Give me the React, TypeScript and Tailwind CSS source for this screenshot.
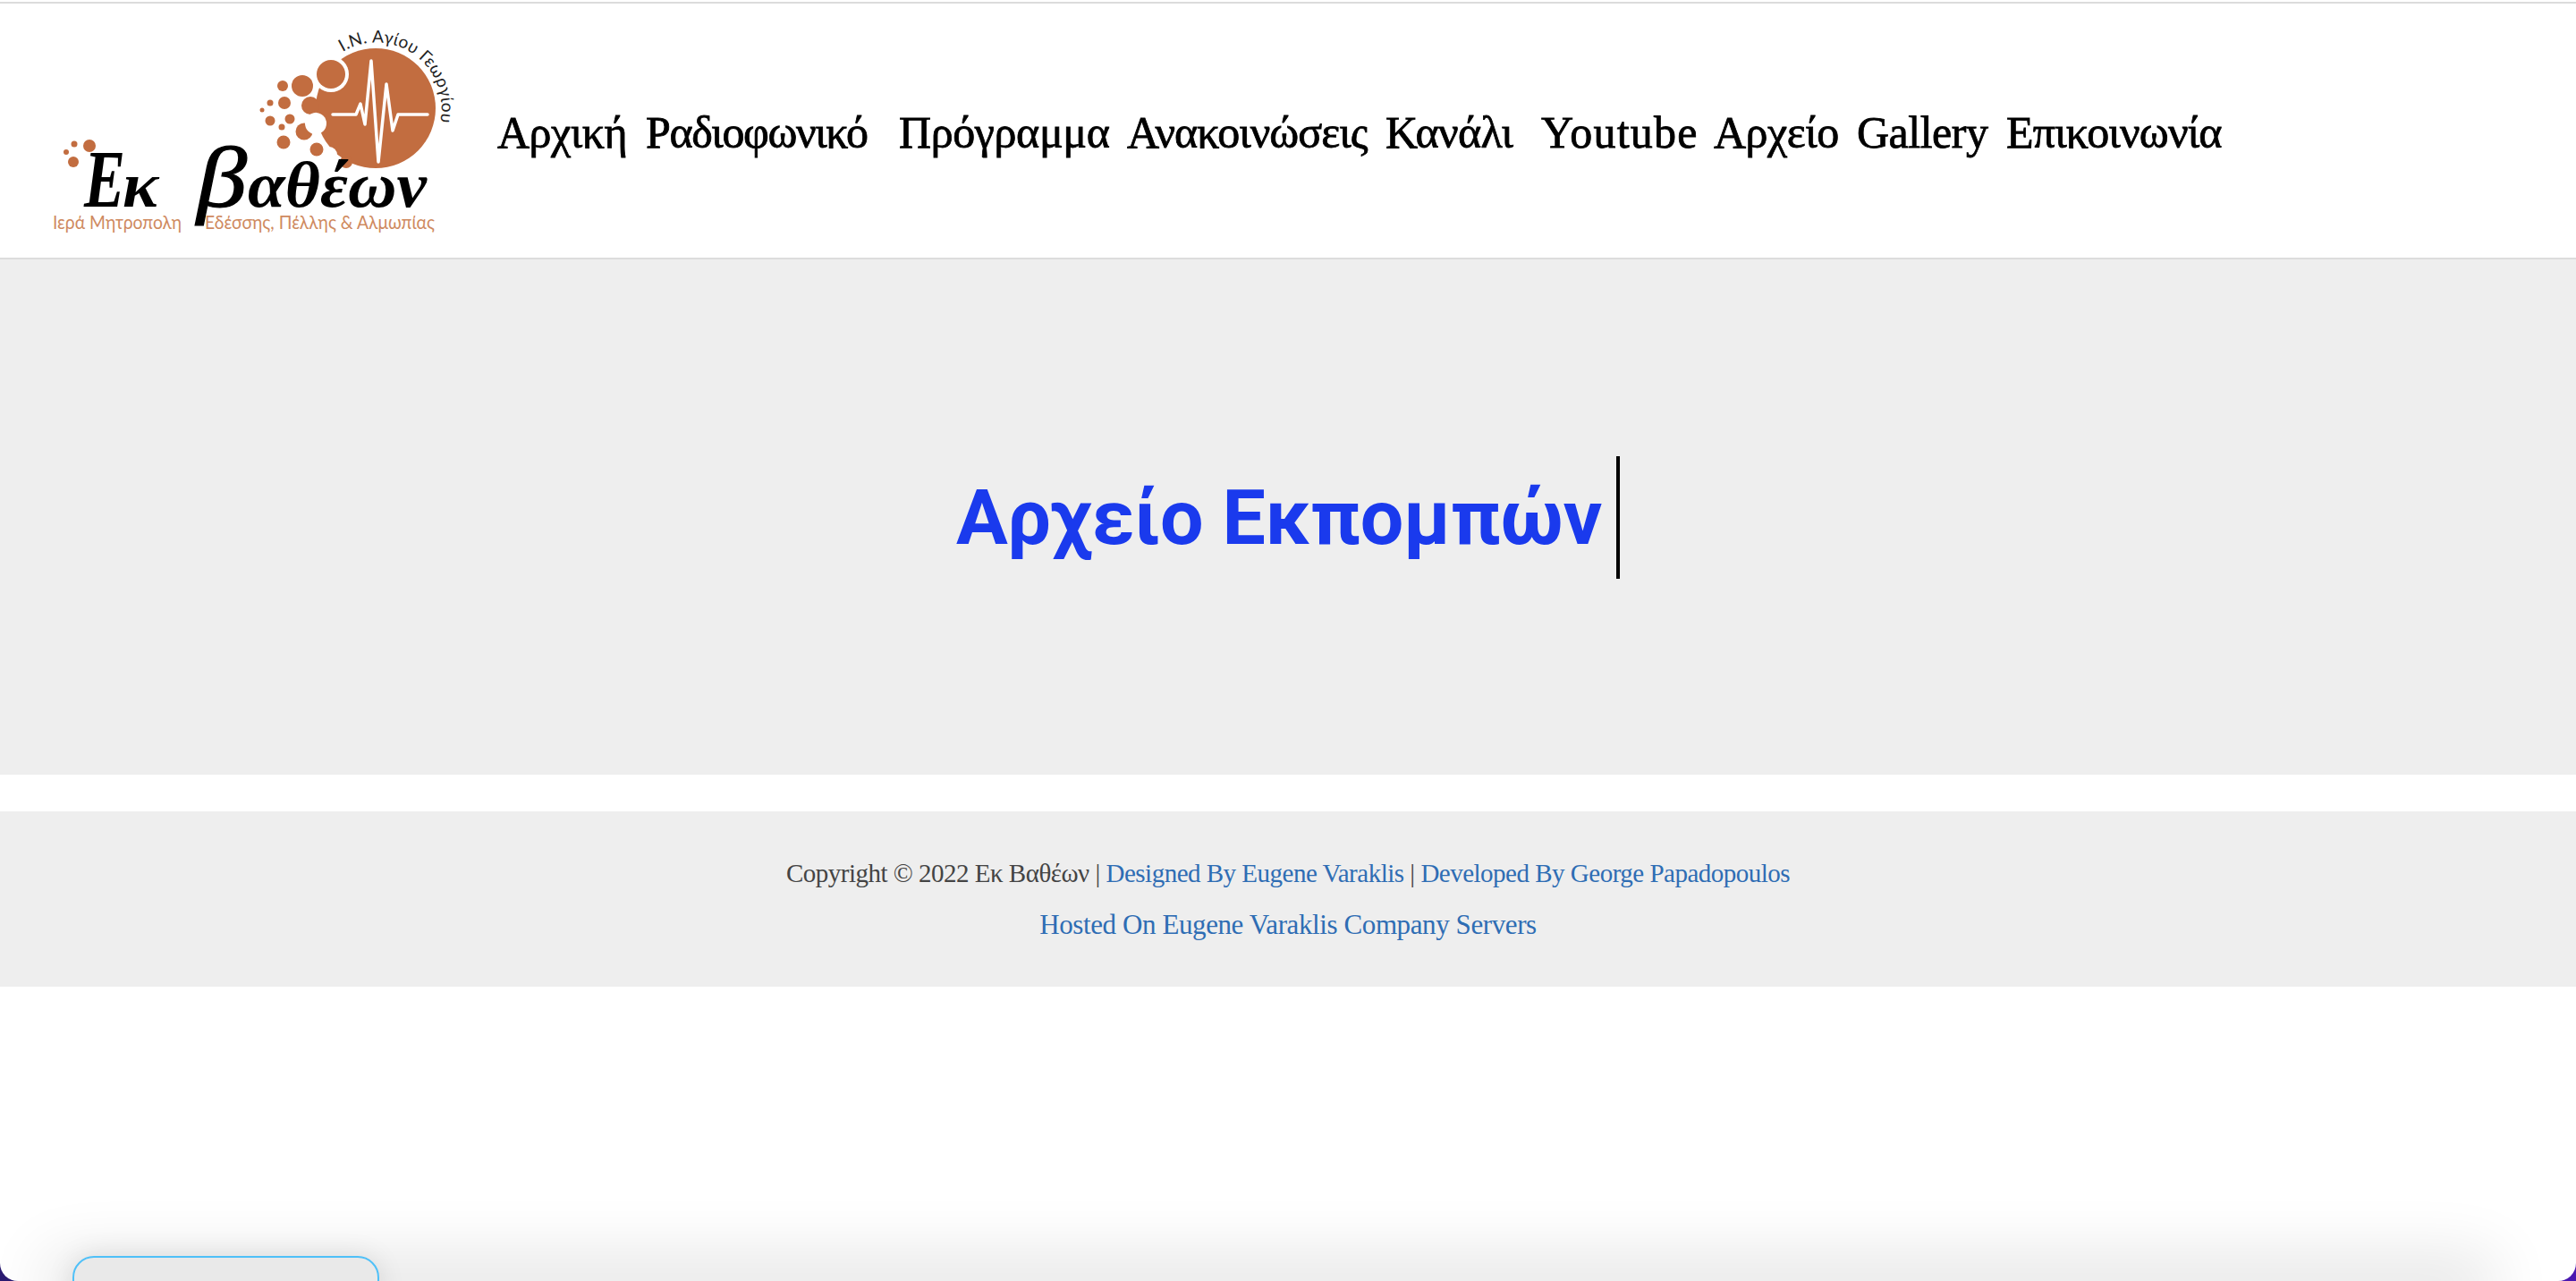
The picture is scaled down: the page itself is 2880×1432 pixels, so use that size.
const orange = '#c26d40';

const navItems = [
  { label: 'Αρχική', box: 'w-[166px] tracking-[-0.5px]' },
  { label: 'Ραδιοφωνικό', box: 'w-[283px] tracking-[-1.4px]' },
  { label: 'Πρόγραμμα', box: 'w-[255px] tracking-[-0.4px]' },
  { label: 'Ανακοινώσεις', box: 'w-[289px] tracking-[-1px]' },
  { label: 'Κανάλι', box: 'w-[174px] tracking-[-0.7px]' },
  { label: 'Youtube', box: 'w-[193px] tracking-[1.2px]' },
  { label: 'Αρχείο', box: 'w-[160px] tracking-[-0.5px]' },
  { label: 'Gallery', box: 'w-[167px] tracking-[-0.5px]' },
  { label: 'Επικοινωνία', box: 'w-[240px] tracking-[-0.8px]' },
];

const bubbles = [
  [338, 95, 12],
  [316, 95, 6],
  [318, 114, 7],
  [302, 114, 3.5],
  [293, 122, 2.5],
  [302, 134, 5.5],
  [324, 132, 5.5],
  [315, 141, 3.5],
  [340, 146, 9.5],
  [317, 158, 7.5],
  [354, 166, 7.5],
  [347, 117, 10],
  [387, 180, 7],
  [100, 162, 7],
  [83, 160, 3.5],
  [74, 169, 3],
  [82, 180, 6],
];

function Logo() {
  const script = { fontFamily: "'Liberation Serif', serif", fontStyle: 'italic', fontWeight: 700, fill: 'black' };
  return (
    <svg width="540" height="285" viewBox="0 3 540 285" className="shrink-0">
      <defs>
        <path id="logo-arc" d="M 383 57 A 73 73 0 0 1 492 135" />
      </defs>
      <circle cx="420" cy="120" r="67" fill={orange} />
      <circle cx="368" cy="172" r="9" fill="white" />
      {bubbles.map(([cx, cy, r]) => (
        <circle key={`${cx}-${cy}`} cx={cx} cy={cy} r={r} fill={orange} />
      ))}
      <circle cx="353" cy="137" r="12" fill="white" />
      <circle cx="370" cy="82" r="20" fill="white" />
      <circle cx="370" cy="82" r="16" fill={orange} />
      <path
        d="M372 127H398L403 115L408 138L415 67L423 180L432 93L439 145L445 127H478"
        fill="none"
        stroke="white"
        strokeWidth="3.5"
        strokeLinejoin="round"
        strokeLinecap="round"
      />
      <text fontFamily="Lato, sans-serif" fontSize="19" fill="#222">
        <textPath href="#logo-arc" textLength="170" lengthAdjust="spacing">
          Ι.Ν. Αγίου Γεωργίου
        </textPath>
      </text>
      <g fontFamily="Lato, sans-serif" fontSize="21" fill="#cf8a60">
        <text x="59" y="255" textLength="144" lengthAdjust="spacingAndGlyphs">
          Ιερά Μητροπολη
        </text>
        <text x="229" y="255" textLength="257" lengthAdjust="spacingAndGlyphs">
          Εδέσσης, Πέλλης &amp; Αλμωπίας
        </text>
      </g>
      <text {...script} x="94" y="230" fontSize="92" textLength="46" lengthAdjust="spacingAndGlyphs">
        Ε
      </text>
      <text {...script} x="137" y="230" fontSize="72" textLength="40" lengthAdjust="spacingAndGlyphs">
        κ
      </text>
      <text {...script} fontWeight={400} stroke="black" strokeWidth="1.2" x="220" y="230" fontSize="98" textLength="56" lengthAdjust="spacingAndGlyphs">
        β
      </text>
      <text {...script} x="277" y="230" fontSize="72" textLength="200" lengthAdjust="spacingAndGlyphs">
        αθέων
      </text>
    </svg>
  );
}

export default function App() {
  return (
    <div className="h-[1432px] overflow-hidden bg-gradient-to-r from-[#2a1a70] to-[#4a17b0]">
      <div className="relative h-full overflow-hidden rounded-b-[20px] bg-white pt-[2px]">
        <header className="flex h-[288px] items-center border-y-2 border-[#dcdcdc]">
          <Logo />
          <nav className="ml-[16px] mt-[3px] flex items-center font-['Liberation_Serif',serif] text-[50px] leading-none text-black [-webkit-text-stroke:0.8px_black]">
            {navItems.map(item => (
              <a key={item.label} className={`${item.box} whitespace-nowrap`}>
                {item.label}
              </a>
            ))}
          </nav>
        </header>
        <section className="flex h-[576px] items-center justify-center bg-[#eeeeee]">
          <h1 className="flex items-center font-['Roboto',sans-serif] text-[86px] font-bold tracking-[-0.2px] text-[#1a3aed]">
            Αρχείο Εκπομπών
            <span className="ml-[16px] h-[137px] w-[4px] bg-black" />
          </h1>
        </section>
        <footer className="mt-[41px] flex h-[196px] flex-col items-center justify-center bg-[#eeeeee] font-['Liberation_Serif',serif] leading-[58px] text-[#444444]">
          <p className="text-[29px] tracking-[-0.5px]">
            Copyright © 2022 Εκ Βαθέων | <a className="text-[#2e6db4]">Designed By Eugene Varaklis</a> |{' '}
            <a className="text-[#2e6db4]">Developed By George Papadopoulos</a>
          </p>
          <p className="text-[31px] tracking-[-0.4px] text-[#2e6db4]">Hosted On Eugene Varaklis Company Servers</p>
        </footer>
        <div className="absolute left-[80px] right-[120px] -bottom-[6px] h-[6px] shadow-[0_0_70px_28px_rgba(0,0,0,0.11)]" />
        <div className="absolute -bottom-[40px] left-[81px] h-[68px] w-[343px] rounded-[24px] border-2 border-[#4fc0f8] bg-[#e9e9e9] shadow-[0_0_30px_rgba(0,0,0,0.1)]" />
      </div>
    </div>
  );
}
